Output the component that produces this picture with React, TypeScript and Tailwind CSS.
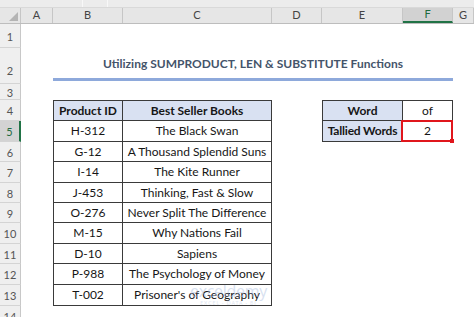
import React from 'react'

const cols = [
  { key: 'A', w: 'w-[32px]' },
  { key: 'B', w: 'w-[70px]' },
  { key: 'C', w: 'w-[149px]' },
  { key: 'D', w: 'w-[50px]' },
  { key: 'E', w: 'w-[81px]' },
  { key: 'F', w: 'w-[50px]' },
  { key: 'G', w: 'flex-1' },
]

const books = [
  ['H-312', 'The Black Swan'],
  ['G-12', 'A Thousand Splendid Suns'],
  ['I-14', 'The Kite Runner'],
  ['J-453', 'Thinking, Fast & Slow'],
  ['O-276', 'Never Split The Difference'],
  ['M-15', 'Why Nations Fail'],
  ['D-10', 'Sapiens'],
  ['P-988', 'The Psychology of Money'],
  ['T-002', "Prisoner's of Geography"],
]

// row heights for rows 4..13
const tableRowH = ['h-[21px]', 'h-[21px]', 'h-[20px]', 'h-[21px]', 'h-[20px]', 'h-[20px]', 'h-[21px]', 'h-[20px]', 'h-[21px]', 'h-[21px]']

function RowHead({ n, active, pad = 'pt-[3px]' }: { n: number; active?: boolean; pad?: string }) {
  return (
    <div
      className={
        'w-[21px] shrink-0 h-full flex items-center justify-center text-[11px] border-b border-[#d4d4d4] ' +
        pad +
        ' ' +
        (active
          ? 'bg-[#d3d3d3] text-[#1e6b3e] border-r-2 border-r-[#217346]'
          : 'bg-[#efefef] text-[#555] border-r border-r-[#c8c8c8]')
      }
    >
      {n}
    </div>
  )
}

export default function App() {
  return (
    <div className="w-[474px] h-[317px] overflow-hidden bg-white relative font-['Lato',sans-serif] text-[#161616]">
      {/* strip above headers */}
      <div className="h-[8px] bg-[#ececec] flex border-b border-[#d9d9d9]">
        <div className="w-[83px] border-r border-[#f8f8f8]" />
        <div className="w-[25px] border-r border-[#f8f8f8]" />
      </div>

      {/* column headers */}
      <div className="h-[16px] flex bg-[#e6e6e6] border-b border-[#bdbdbd] text-[11px] text-[#444]">
        <div className="w-[21px] shrink-0 border-r border-[#c6c6c6] relative">
          <div className="absolute right-[2px] bottom-[2px] w-0 h-0 border-l-[9px] border-l-transparent border-b-[9px] border-b-[#b4b4b4]" />
        </div>
        {cols.map((c) => (
          <div
            key={c.key}
            className={
              c.w +
              ' shrink-0 flex items-center justify-center border-r border-[#c6c6c6] ' +
              (c.key === 'F' ? 'bg-[#d2d2d2] border-b-2 border-b-[#217346] text-[#1e6b3e]' : '')
            }
          >
            {c.key}
          </div>
        ))}
      </div>

      {/* row 1 */}
      <div className="h-[24px] flex">
        <RowHead n={1} />
      </div>

      {/* row 2 - title */}
      <div className="h-[36px] flex">
        <RowHead n={2} pad="pt-[12px]" />
        <div className="w-[32px] shrink-0" />
        <div className="w-[400px] h-[33px] shrink-0 flex items-center justify-center pt-[2px] border-b-[3px] border-[#8ea9db] text-[12px] font-bold text-[#44546a]">
          Utilizing SUMPRODUCT, LEN &amp; SUBSTITUTE Functions
        </div>
      </div>

      {/* row 3 */}
      <div className="h-[16px] flex">
        <RowHead n={3} />
      </div>

      {/* rows 4..13 */}
      {tableRowH.map((h, i) => {
        const header = i === 0
        const book = header ? ['Product ID', 'Best Seller Books'] : books[i - 1]
        const cell =
          'shrink-0 h-full flex items-center justify-center border-r border-b border-[#3a3a3a] ' +
          (header ? 'bg-[#d9e1f2] font-bold border-t ' : '')
        return (
          <div key={i} className={h + ' flex text-[12px]'}>
            <RowHead n={i + 4} active={i === 1} />
            <div className="w-[32px] shrink-0" />
            <div className={cell + 'w-[70px] border-l'}>{book[0]}</div>
            <div className={cell + 'w-[149px]'}>{book[1]}</div>
            <div className="w-[50px] shrink-0" />
            {i === 0 && (
              <>
                <div className="w-[81px] shrink-0 h-full flex items-center justify-center bg-[#d9e1f2] font-bold border border-[#3a3a3a]">
                  Word
                </div>
                <div className="w-[50px] shrink-0 h-full flex items-center justify-center border-y border-r border-[#3a3a3a]">
                  of
                </div>
              </>
            )}
            {i === 1 && (
              <>
                <div className="w-[81px] shrink-0 h-full flex items-center justify-center bg-[#d9e1f2] font-bold border-x border-b border-[#3a3a3a] tracking-[-0.2px]">
                  Tallied Words
                </div>
                <div className="w-[50px] shrink-0 h-full flex items-center justify-center border-r border-b border-[#3a3a3a] relative">
                  2
                  <div className="absolute -left-[2px] -top-[1px] -right-[1px] -bottom-[1px] border-2 border-[#e0161c]" />
                  <div className="absolute -right-[2px] -bottom-[2px] w-[4px] h-[4px] bg-[#e0161c]" />
                </div>
              </>
            )}
          </div>
        )
      })}

      {/* row 14 */}
      <div className="h-[20px] flex">
        <RowHead n={14} />
      </div>

      {/* watermark */}
      <div className="absolute left-[190px] top-[283px] flex flex-col items-center opacity-45 pointer-events-none">
        <div className="text-[16px] leading-[17px] text-[#a9bde0] font-['Open_Sans',sans-serif] tracking-[-0.3px]">
          exceldemy
        </div>
        <div className="text-[5px] leading-[6px] text-[#b8c6e0] tracking-[1px]">EXCEL · DATA · BI</div>
      </div>
    </div>
  )
}
